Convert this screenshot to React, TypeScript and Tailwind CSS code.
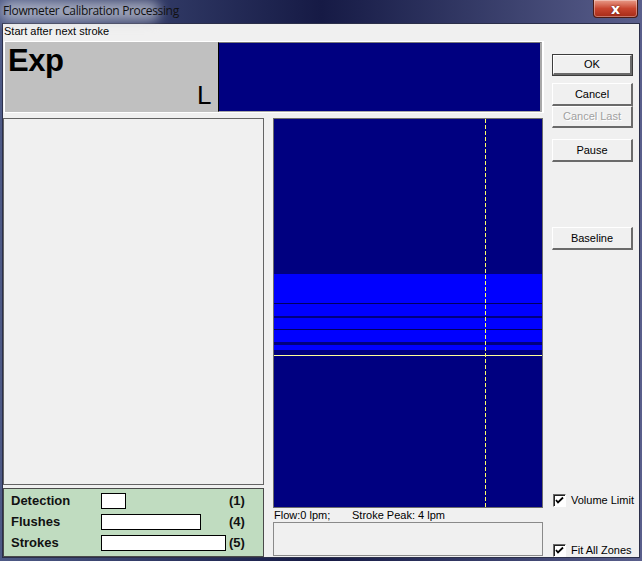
const sans = "font-['Liberation_Sans',Arial,sans-serif]";

function WinButton({ label, isDefault, disabled }: { label: string; isDefault?: boolean; disabled?: boolean }) {
  return (
    <div className={`h-[23px] w-[81px] ${isDefault ? "border border-[#3c3c3c]" : ""}`}>
      <div className="flex h-full w-full items-center justify-center border-t border-l border-white border-r-2 border-b-2 border-r-[#6a6a6a] border-b-[#6a6a6a] bg-[#f0f0f0]">
        <span className={`text-[11px] leading-none ${disabled ? "text-[#a0a0a0] [text-shadow:1px_1px_0_#fff]" : "text-black"}`}>
          {label}
        </span>
      </div>
    </div>
  );
}

function CheckBox({ label }: { label: string }) {
  return (
    <div className="flex h-[14px] items-center gap-[5px] whitespace-nowrap">
      <div className="flex h-[13px] w-[13px] shrink-0 items-center justify-center border border-t-[#6a6a6a] border-l-[#6a6a6a] border-r-white border-b-white bg-white shadow-[inset_1px_1px_0_#222]">
        <svg viewBox="0 0 9 9" className="h-[9px] w-[9px]">
          <polyline points="1,4 3,6.5 8,1.5" fill="none" stroke="#000" strokeWidth="1.8" />
        </svg>
      </div>
      <span className="text-[11px] leading-none text-black">{label}</span>
    </div>
  );
}

function Chart() {
  return (
    <svg viewBox="0 0 268 388" className="block h-[388px] w-[268px]">
      <rect x="0" y="0" width="268" height="388" fill="#000080" />
      <rect x="0" y="155" width="268" height="76" fill="#0000ff" />
      <rect x="0" y="184" width="268" height="1" fill="#000060" />
      <rect x="0" y="197" width="268" height="2" fill="#000080" />
      <rect x="0" y="210" width="268" height="1" fill="#000060" />
      <rect x="0" y="223" width="268" height="3" fill="#000080" />
      <rect x="0" y="236" width="268" height="1" fill="#ffff99" />
      <line x1="211.5" y1="0" x2="211.5" y2="388" stroke="#ffff66" strokeWidth="1" strokeDasharray="4 2" />
    </svg>
  );
}

function BarRow({ label, width, count }: { label: string; width: number; count: string }) {
  return (
    <div className="flex h-[21px] items-center">
      <span className="w-[90px] text-[13px] font-bold leading-none text-[#111]">{label}</span>
      <div className="flex w-[128px] items-center">
        <div className="h-[16px] border border-black bg-white" style={{ width }} />
      </div>
      <span className="w-[20px] text-[13px] font-bold leading-none text-[#111]">{count}</span>
    </div>
  );
}

export default function App() {
  return (
    <div className={`flex h-[561px] w-[642px] flex-col overflow-hidden bg-linear-to-r from-[#4e5a86] via-[#161a45] to-[#5a5f8c] ${sans}`}>
      {/* title bar */}
      <div className="relative h-[23px] shrink-0">
        <div className="absolute left-0 top-[1px] h-[20px] w-[160px] rounded-full bg-[#c9cdd8]/70 blur-[6px]" />
        <span className="absolute left-[3px] top-[4px] font-['Open_Sans',sans-serif] text-[12px] leading-[14px] tracking-[-0.35px] text-[#111]">
          Flowmeter Calibration Processing
        </span>
        <div className="absolute right-[4px] top-0 flex h-[18px] w-[45px] items-center justify-center rounded-b-[4px] border border-t-0 border-[#4a1a14] bg-linear-to-b from-[#e89a88] via-[#c8452f] to-[#a52a17] shadow-[inset_0_0_0_1px_rgba(255,255,255,0.35)]">
          <span className="font-['DejaVu_Sans',sans-serif] text-[14px] font-bold leading-none text-white [text-shadow:0_0_2px_#5a1a10]">x</span>
        </div>
      </div>

      {/* client area */}
      <div className="ml-[2px] flex h-[535px] w-[638px] shrink-0 border border-[#2b2f4a] bg-[#f0f0f0]">
        <div className="flex w-[540px] flex-col">
          <div className="h-[17px] pl-[1px] text-[11px] leading-[15px] text-black">Start after next stroke</div>

          {/* header */}
          <div className="ml-[1px] flex h-[72px] w-[540px] border border-r-2 border-white">
            <div className="relative w-[213px] bg-[#c0c0c0]">
              <span className="absolute left-[3px] top-[1px] text-[31px] font-bold leading-[36px] tracking-[-0.5px] text-black">Exp</span>
              <span className="absolute left-[192px] top-[38px] text-[26px] leading-[30px] text-black">L</span>
            </div>
            <div className="flex-1 border-l border-t border-r-2 border-b border-l-black border-t-[#7a7a7a] border-r-[#a8a8a8] border-b-[#a8a8a8] bg-[#000080]" />
          </div>

          {/* body */}
          <div className="mt-[5px] flex h-[439px]">
            <div className="flex w-[261px] flex-col">
              <div className="h-[367px] border border-[#646464] bg-[#f0f0f0]" />
              <div className="mt-[3px] flex h-[69px] flex-col border border-[#4a4a4a] bg-[#c0dcc0] pl-[7px] pt-[1px]">
                <BarRow label="Detection" width={25} count="(1)" />
                <BarRow label="Flushes" width={100} count="(4)" />
                <BarRow label="Strokes" width={125} count="(5)" />
              </div>
            </div>

            <div className="ml-[9px] flex w-[270px] flex-col">
              <div className="h-[390px] border border-[#6d6d6d]">
                <Chart />
              </div>
              <div className="flex h-[14px] items-end text-[11px] leading-[13px] text-black">
                <span className="w-[79px] pl-[1px]">Flow:0 lpm;</span>
                <span>Stroke Peak: 4 lpm</span>
              </div>
              <div className="h-[34px] border border-[#8a8a8a] bg-[#f0f0f0]" />
            </div>
          </div>
        </div>

        {/* buttons */}
        <div className="ml-[9px] flex w-[81px] flex-col pt-[30px]">
          <WinButton label="OK" isDefault />
          <div className="mt-[7px]">
            <WinButton label="Cancel" />
          </div>
          <WinButton label="Cancel Last" disabled />
          <div className="mt-[11px]">
            <WinButton label="Pause" />
          </div>
          <div className="mt-[65px]">
            <WinButton label="Baseline" />
          </div>
          <div className="mt-[243px] pl-[1px]">
            <CheckBox label="Volume Limit" />
          </div>
          <div className="mt-[36px] pl-[1px]">
            <CheckBox label="Fit All Zones" />
          </div>
        </div>
      </div>
    </div>
  );
}
